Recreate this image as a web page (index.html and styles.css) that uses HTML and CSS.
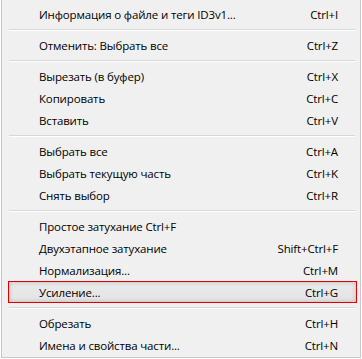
FILE: index.html
```html
<!DOCTYPE html>
<html>
  <head>
    <meta charset="utf-8" />
    <title>Menu</title>
    <link rel="stylesheet" href="styles.css">
  </head>
  <body>
    <div class="menu">
      <div class="item"><span>Информация о файле и теги ID3v1...</span><span class="key">Ctrl+I</span></div>
      <div class="sep"></div>
      <div class="item"><span>Отменить: Выбрать все</span><span class="key">Ctrl+Z</span></div>
      <div class="sep"></div>
      <div class="item"><span>Вырезать (в буфер)</span><span class="key">Ctrl+X</span></div>
      <div class="item"><span>Копировать</span><span class="key">Ctrl+C</span></div>
      <div class="item"><span>Вставить</span><span class="key">Ctrl+V</span></div>
      <div class="sep"></div>
      <div class="item"><span>Выбрать все</span><span class="key">Ctrl+A</span></div>
      <div class="item"><span>Выбрать текущую часть</span><span class="key">Ctrl+K</span></div>
      <div class="item"><span>Снять выбор</span><span class="key">Ctrl+R</span></div>
      <div class="sep"></div>
      <div class="item"><span>Простое затухание Ctrl+F</span></div>
      <div class="item"><span>Двухэтапное затухание</span><span class="key">Shift+Ctrl+F</span></div>
      <div class="item"><span>Нормализация...</span><span class="key">Ctrl+M</span></div>
      <div class="item active"><span>Усиление...</span><span class="key">Ctrl+G</span></div>
      <div class="sep"></div>
      <div class="item"><span>Обрезать</span><span class="key">Ctrl+H</span></div>
      <div class="item"><span>Имена и свойства части...</span><span class="key">Ctrl+N</span></div>
    </div>
  </body>
</html>
```

FILE: styles.css
```css
body {
  margin: 0;
  background: #ffffff;
  font-family: "Open Sans", "Noto Sans", sans-serif;
  font-size: 11.5px;
  letter-spacing: -0.15px;
  color: #000;
}

.menu {
  box-sizing: border-box;
  width: 360px;
  height: 358px;
  margin-left: 1px;
  padding-top: 3px;
  background: #f0f0f0;
  border-left: 1px solid #c8c8c8;
  border-right: 1px solid #c8c8c8;
  border-bottom: 1px solid #c8c8c8;
}

.item {
  box-sizing: border-box;
  height: 22px;
  margin: 0 3px 0 6px;
  padding: 0 19px 0 31px;
  display: flex;
  align-items: center;
  justify-content: space-between;
  white-space: nowrap;
}

/* hovered row, framed in red */
.item.active {
  border: 1px solid #e00000;
  background: linear-gradient(#eaeaea, #e4e4e4);
  box-shadow: inset 0 0 4px rgba(0, 0, 0, 0.22);
  padding-left: 30px;
  padding-right: 18px;
}

.sep {
  height: 0;
  margin: 4px 5px 3px 7px;
  border-top: 1px solid #d7d7d7;
  border-bottom: 1px solid #ffffff;
}
```
